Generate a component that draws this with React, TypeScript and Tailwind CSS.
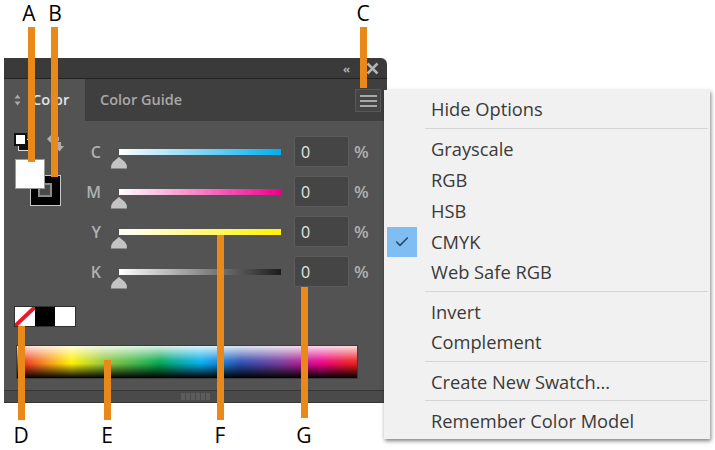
import React from 'react';
import { Check } from 'lucide-react';

const sliders = [
  { label: 'C', bar: 'bg-[linear-gradient(to_right,#ffffff,#00aeef)]' },
  { label: 'M', bar: 'bg-[linear-gradient(to_right,#ffffff,#ec008c)]' },
  { label: 'Y', bar: 'bg-[linear-gradient(to_right,#ffffff,#fff200)]' },
  { label: 'K', bar: 'bg-[linear-gradient(to_right,#ffffff,#1c1c1c)]' },
];

const menuGroups = [
  ['Hide Options'],
  ['Grayscale', 'RGB', 'HSB', 'CMYK', 'Web Safe RGB'],
  ['Invert', 'Complement'],
  ['Create New Swatch...'],
  ['Remember Color Model'],
];

// callout bars sit on top of the panel
const callouts = [
  { letter: 'A', text: 'left-[18px] top-[1px] w-[22px]', line: 'left-[28px] top-[27px] h-[135px]' },
  { letter: 'B', text: 'left-[44px] top-[1px] w-[22px]', line: 'left-[51px] top-[27px] h-[150px]' },
  { letter: 'C', text: 'left-[352px] top-[1px] w-[22px]', line: 'left-[360px] top-[27px] h-[61px]' },
  { letter: 'D', text: 'left-[10px] top-[423px] w-[22px]', line: 'left-[18px] top-[326px] h-[94px]' },
  { letter: 'E', text: 'left-[96px] top-[423px] w-[22px]', line: 'left-[104px] top-[360px] h-[60px]' },
  { letter: 'F', text: 'left-[209px] top-[423px] w-[22px]', line: 'left-[217px] top-[235px] h-[185px]' },
  { letter: 'G', text: 'left-[293px] top-[423px] w-[22px]', line: 'left-[301px] top-[287px] h-[131px]' },
];

function SliderRow({ label, bar }: { label: string; bar: string }) {
  return (
    <div className="flex h-[31px] items-center">
      <span className="w-[44px] pr-[18px] text-right text-[16px] font-semibold text-[#b0b0b0]">{label}</span>
      <div className="relative h-[31px] w-[162px]">
        <div className={`absolute left-0 top-[13px] h-[6px] w-full ${bar}`} />
        <svg className="absolute left-[-8px] top-[21px]" width="16" height="12" viewBox="0 0 16 12">
          <path d="M8 0 L14 5 Q16 7 16 11.5 L0 11.5 Q0 7 2 5 Z" fill="#c4c4c4" />
        </svg>
      </div>
      <div className="ml-[13px] flex h-[31px] w-[55px] items-center rounded-[2px] border border-[#5c5c5c] bg-[#454545] pl-[6px] text-[16px] text-[#e6e6e6]">0</div>
      <span className="ml-[5px] text-[17px] font-semibold text-[#b0b0b0]">%</span>
    </div>
  );
}

function FillStroke() {
  return (
    <div className="relative h-[76px] w-[50px] shrink-0">
      {/* default fill/stroke */}
      <svg className="absolute left-0 top-0" width="16" height="20" viewBox="0 0 16 20">
        <rect x="4.5" y="6.5" width="10" height="11" fill="#111" stroke="#ddd" />
        <rect x="1" y="1" width="11" height="11" fill="#fff" stroke="#111" strokeWidth="2" />
      </svg>
      {/* swap arrows */}
      <svg className="absolute left-[33px] top-[1px]" width="18" height="18" viewBox="0 0 18 18">
        <path d="M0 5 L5 0 V3 H12 V7 H5 V10 Z M10 8 H14 V12 H17 L12.5 17.5 L8 12 H10 Z" fill="#b0b0b0" />
      </svg>
      <div className="absolute left-[16px] top-[42px] flex h-[31px] w-[31px] items-center justify-center border border-[#c8c8c8] bg-black">
        <div className="ml-[-1px] mt-[-1px] h-[14px] w-[14px] border-2 border-[#8a8a8a] bg-[#4a4a4a]" />
      </div>
      <div className="absolute left-[1px] top-[26px] h-[30px] w-[30px] border border-[#9a9a9a] bg-white" />
    </div>
  );
}

export default function App() {
  return (
    <div className="relative h-[450px] w-[715px] overflow-hidden bg-white font-['Open_Sans','Noto_Sans',sans-serif]">
      <div className="ml-[4px] flex h-[403px] w-[383px] flex-col pt-[58px]">
        <div className="flex h-[21px] shrink-0 items-center justify-end gap-[17px] rounded-tr-[6px] border-b border-[#222] bg-[#3a3a3a] pr-[8px]">
          <span className="text-[11px] font-bold leading-none tracking-[-1px] text-[#b4b4b4]">‹‹</span>
          <svg width="13" height="13" viewBox="0 0 13 13">
            <path d="M1.5 1.5 L11.5 11.5 M11.5 1.5 L1.5 11.5" stroke="#b4b4b4" strokeWidth="2.5" />
          </svg>
        </div>

        <div className="flex h-[42px] shrink-0 bg-[#3f3f3f]">
          <div className="flex w-[81px] items-center bg-[#535353] pl-[10px]">
            <svg width="7" height="12" viewBox="0 0 7 12">
              <path d="M3.5 0.5 L6.5 4.5 H0.5 Z M3.5 11.5 L0.5 7.5 H6.5 Z" fill="#a9a9a9" />
            </svg>
            <span className="ml-[11px] text-[14.5px] font-semibold text-[#e4e4e4]">Color</span>
          </div>
          <span className="ml-[15px] self-center text-[14.5px] font-semibold text-[#a8a8a8]">Color Guide</span>
          <div className="ml-auto mr-[6px] mt-[10px] flex h-[23px] w-[26px] flex-col items-center justify-center gap-[3px] border border-[#575757] bg-[#454545]">
            <div className="h-[2px] w-[17px] bg-[#a8a8a8]" />
            <div className="h-[2px] w-[17px] bg-[#a8a8a8]" />
            <div className="h-[2px] w-[17px] bg-[#a8a8a8]" />
          </div>
        </div>

        <div className="flex h-[269px] shrink-0 flex-col bg-[#535353] pl-[10px]">
          <div className="flex pt-[12px]">
            <FillStroke />
            <div className="ml-[11px] mt-[3px] flex flex-col gap-[9px]">
              {sliders.map((s) => (
                <SliderRow key={s.label} label={s.label} bar={s.bar} />
              ))}
            </div>
          </div>

          <div className="mt-[19px] flex h-[21px] w-[62px] border border-[#2e2e2e] bg-black">
            <div className="relative w-[20px] overflow-hidden bg-white">
              <svg className="absolute inset-0" width="20" height="19" viewBox="0 0 20 19">
                <path d="M0 19 L20 0" stroke="#e8192c" strokeWidth="4" />
              </svg>
            </div>
            <div className="w-[20px] bg-black" />
            <div className="w-[20px] bg-white" />
          </div>

          <div className="relative ml-[2px] mt-[18px] h-[34px] w-[342px] border border-[#3c3c3c] bg-[linear-gradient(to_right,#ed1c24_0%,#f7941d_9%,#fff200_16%,#8dc63f_26%,#39b54a_36%,#00a651_42%,#00a99d_47%,#00aeef_54%,#2b4cb0_66%,#7a3a9a_78%,#ec008c_89%,#ed1c24_98%)]">
            <div className="absolute inset-0 bg-[linear-gradient(to_bottom,rgba(255,255,255,0.85)_0%,rgba(255,255,255,0.1)_45%,rgba(0,0,0,0)_55%,rgba(0,0,0,1)_100%)]" />
          </div>
        </div>

        <div className="flex h-[13px] shrink-0 items-center justify-center gap-[1px] border-t border-b border-[#363636] bg-[#4a4a4a]">
          {[0, 1, 2, 3, 4, 5].map((i) => (
            <div key={i} className="h-[7px] w-[4px] bg-[#5c5c5c]" />
          ))}
        </div>
      </div>

      {/* flyout menu */}
      <div className="absolute left-[384px] top-[90px] w-[326px] bg-[#f1f1f1] pb-[2px] pt-[4px] text-[18.3px] text-[#3a3a3a] shadow-[1px_2px_4px_rgba(0,0,0,0.5)]">
        {menuGroups.map((group, gi) => (
          <div key={gi}>
            {gi > 0 && (
              <div className={`mb-[5px] ml-[41px] mr-[2px] h-px bg-[#d6d6d6] ${gi === 1 ? 'mt-[3.5px]' : 'mt-[2.5px]'}`} />
            )}
            {group.map((item) => (
              <div key={item} className="relative flex h-[30.75px] items-center pl-[47px] leading-none">
                {item === 'CMYK' && (
                  <div className="absolute left-[3px] top-0 flex h-[30px] w-[30px] items-center justify-center bg-[#80bdf2]">
                    <Check size={16} strokeWidth={2.5} color="#2f4a63" />
                  </div>
                )}
                {item}
              </div>
            ))}
          </div>
        ))}
      </div>

      {callouts.map((c) => (
        <React.Fragment key={c.letter}>
          <span className={`absolute text-center text-[21px] leading-[24px] text-black ${c.text}`}>{c.letter}</span>
          <div className={`absolute w-[7px] bg-[#e8891a] ${c.line}`} />
        </React.Fragment>
      ))}
    </div>
  );
}
